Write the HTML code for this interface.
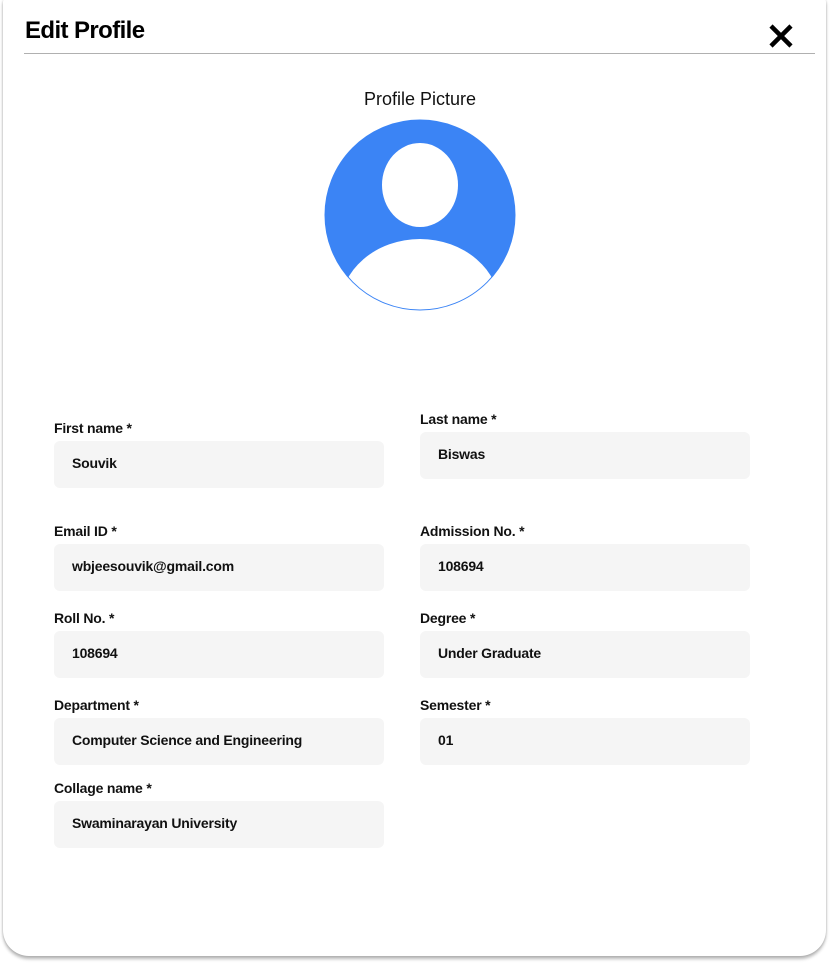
<!DOCTYPE html>
<html><head><style>
body{margin:0;width:830px;height:964px;background:#fff;font-family:"Liberation Sans",sans-serif;position:relative;overflow:hidden}
.card{position:absolute;left:3px;top:-2px;width:823px;height:958px;background:#fff;border-radius:4px 4px 26px 26px;box-shadow:0 3px 3px rgba(0,0,0,.28),0 0 2px rgba(0,0,0,.15)}
h1{position:absolute;left:25px;top:17px;margin:0;font-size:24px;font-weight:bold;letter-spacing:-0.6px;color:#000}
.hr{position:absolute;left:24px;top:53px;width:791px;height:1px;background:#b0b0b0}
.pp{position:absolute;left:0;width:840px;top:89px;text-align:center;font-size:18px;color:#111}
.l{position:absolute;font-size:14px;font-weight:bold;color:#111;letter-spacing:-0.2px}
.f{position:absolute;width:330px;height:47px;background:#f5f5f5;border-radius:6px;font-size:14px;font-weight:bold;color:#111;box-sizing:border-box;padding-left:18px;line-height:45px;letter-spacing:-0.2px}
</style></head><body>
<div class="card"></div>
<h1>Edit Profile</h1>
<svg style="position:absolute;left:768px;top:24px" width="26" height="24" viewBox="0 0 26 24"><path d="M3 2L23 22M23 2L3 22" stroke="#000" stroke-width="4.5"/></svg>
<div class="hr"></div>
<div class="pp">Profile Picture</div>
<svg style="position:absolute;left:323px;top:118px" width="194" height="194" viewBox="0 0 194 194">
<defs><clipPath id="c"><circle cx="97" cy="97" r="95"/></clipPath></defs>
<circle cx="97" cy="97" r="95" fill="#3b84f5"/>
<ellipse cx="97" cy="67" rx="38" ry="42" fill="#fff"/>
<ellipse cx="97" cy="190" rx="80" ry="69" fill="#fff" clip-path="url(#c)"/>
<circle cx="97" cy="97" r="95" fill="none" stroke="#3b84f5" stroke-width="1"/>
</svg>
<div class="l" style="left:54px;top:420px">First name *</div>
<div class="f" style="left:54px;top:441px">Souvik</div>
<div class="l" style="left:420px;top:411px">Last name *</div>
<div class="f" style="left:420px;top:432px">Biswas</div>
<div class="l" style="left:54px;top:523px">Email ID *</div>
<div class="f" style="left:54px;top:544px">wbjeesouvik@gmail.com</div>
<div class="l" style="left:420px;top:523px">Admission No. *</div>
<div class="f" style="left:420px;top:544px">108694</div>
<div class="l" style="left:54px;top:610px">Roll No. *</div>
<div class="f" style="left:54px;top:631px">108694</div>
<div class="l" style="left:420px;top:610px">Degree *</div>
<div class="f" style="left:420px;top:631px">Under Graduate</div>
<div class="l" style="left:54px;top:697px">Department *</div>
<div class="f" style="left:54px;top:718px">Computer Science and Engineering</div>
<div class="l" style="left:420px;top:697px">Semester *</div>
<div class="f" style="left:420px;top:718px">01</div>
<div class="l" style="left:54px;top:780px">Collage name *</div>
<div class="f" style="left:54px;top:801px">Swaminarayan University</div>
</body></html>
